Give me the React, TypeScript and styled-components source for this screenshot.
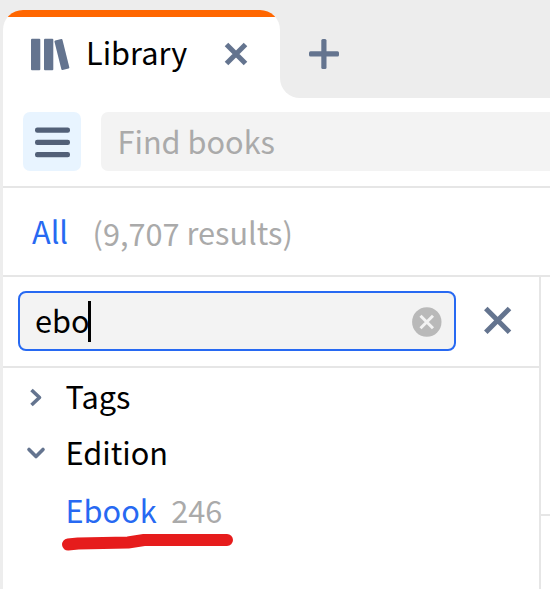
import React from "react";
import styled, { createGlobalStyle } from "styled-components";

const slate = "#64748f";
const blue = "#2769f2";
const line = "#e6e6e6";
const chrome = "#ededed";

const GlobalStyle = createGlobalStyle`
  * { box-sizing: border-box; }
  body {
    margin: 0;
    overflow: hidden;
    background: #fff;
    font-family: "Noto Sans CJK SC", "Noto Sans", sans-serif;
  }
`;

const Window = styled.div`
  display: flex;
  flex-direction: column;
  width: 550px;
  height: 589px;
  overflow: hidden;
  background: #fff;
  border-left: 3px solid ${chrome};
`;

const Icon = styled.svg`
  display: block;
  flex: none;
  overflow: visible;
`;

const Label = styled.span<{
  $size?: number;
  $color?: string;
  $drop?: number;
}>`
  display: inline-block;
  flex: none;
  white-space: pre;
  line-height: 40px;
  font-size: ${(p) => p.$size ?? 30.7}px;
  color: ${(p) => p.$color ?? "#000"};
  transform: translateY(${(p) => p.$drop ?? -1}px);
`;

const TabStrip = styled.header`
  display: flex;
  flex: none;
  height: 98px;
`;

const TabSlot = styled.div`
  width: 277px;
  padding-top: 10px;
  background: linear-gradient(${chrome} 50px, #fff 50px);
`;

const Tab = styled.div`
  display: flex;
  align-items: center;
  height: 88px;
  padding: 0 33px 0 28px;
  border-radius: 20px 20px 0 0;
  background: linear-gradient(#ff6600 7px, #fff 7px);
`;

const TabTitle = styled.div`
  display: flex;
  flex: 1;
  margin-left: 16px;
`;

const NewTab = styled.div`
  flex: 1;
  padding: 39px 0 0 29px;
  border-bottom-left-radius: 20px;
  background: ${chrome};
`;

const Toolbar = styled.div`
  display: flex;
  flex: none;
  height: 90px;
  padding: 14px 0 0 20px;
  gap: 20px;
  border-bottom: 2px solid ${line};
`;

const MenuButton = styled.div`
  display: flex;
  align-items: center;
  justify-content: center;
  width: 58px;
  height: 59px;
  padding-top: 1px;
  border-radius: 7px;
  background: #e8f4ff;
`;

const SearchField = styled.div`
  display: flex;
  flex: 1;
  align-items: center;
  height: 59px;
  padding-left: 16.5px;
  border-radius: 7px 0 0 7px;
  background: #f3f3f3;
`;

const Results = styled.div`
  display: flex;
  flex: none;
  align-items: center;
  height: 89px;
  padding-left: 29px;
  border-bottom: 2px solid ${line};
`;

const Count = styled.div`
  display: flex;
  margin-left: 24.5px;
`;

const Body = styled.div`
  display: flex;
  flex: 1;
`;

const Sidebar = styled.aside`
  width: 538px;
  border-right: 2px solid ${line};
`;

const Main = styled.main`
  flex: 1;
  height: 239px;
  border-bottom: 2px solid ${line};
`;

const FilterBar = styled.div`
  display: flex;
  align-items: center;
  height: 91px;
  padding: 0 0 2px 15px;
  gap: 28px;
  border-bottom: 2px solid ${line};
`;

const FilterInput = styled.div`
  display: flex;
  align-items: center;
  width: 438px;
  height: 60px;
  padding: 0 12px 0 15px;
  border: 2px solid ${blue};
  border-radius: 8px;
  background: #f3f3f3;
`;

const Caret = styled.div`
  width: 3px;
  height: 41px;
  margin: 1px auto 0 -2px;
  background: #000;
`;

const Tree = styled.div`
  padding-top: 2px;
`;

const TreeRow = styled.div<{ $height?: number }>`
  display: grid;
  grid-template-columns: 20px auto auto 1fr;
  align-items: center;
  height: ${(p) => p.$height ?? 56}px;
  padding-left: 23px;
`;

const TreeText = styled.div`
  display: flex;
  grid-column: 2;
  margin-left: 19.5px;
`;

const RowCount = styled.div`
  display: flex;
  margin-left: 14.5px;
`;

const Underline = styled.div`
  padding-left: 57px;
  margin-top: -8px;
`;

export default function App() {
  return (
    <Window>
      <GlobalStyle />
      <TabStrip>
        <TabSlot>
          <Tab>
            <Icon width="39" height="33" viewBox="0 0 39 33" fill={slate}>
              <rect x="0" y="0.8" width="9.3" height="31.5" rx="1" />
              <rect x="13" y="0.8" width="9.3" height="31.5" rx="1" />
              <rect x="26.8" y="1.3" width="8.2" height="30.4" rx="1" transform="rotate(-14 30.9 16.5)" />
            </Icon>
            <TabTitle>
              <Label $drop={-2}>Library</Label>
            </TabTitle>
            <Icon width="22" height="22" viewBox="0 0 22 22" stroke={slate} strokeWidth="5">
              <path d="M1.5 1.5 20.5 20.5M20.5 1.5 1.5 20.5" />
            </Icon>
          </Tab>
        </TabSlot>
        <NewTab>
          <Icon width="30" height="30" viewBox="0 0 30 30" fill={slate}>
            <rect x="0" y="12.3" width="30" height="5.2" rx="1.5" />
            <rect x="12.3" y="0" width="5.2" height="30" rx="1.5" />
          </Icon>
        </NewTab>
      </TabStrip>
      <Toolbar>
        <MenuButton>
          <Icon width="35" height="31" viewBox="0 0 35 31" fill="#526078">
            <rect x="0" y="0.5" width="35" height="5.3" rx="2.3" />
            <rect x="0" y="12.8" width="35" height="5.3" rx="2.3" />
            <rect x="0" y="25" width="35" height="5.3" rx="2.3" />
          </Icon>
        </MenuButton>
        <SearchField>
          <Label $color="#aaa">Find books</Label>
        </SearchField>
      </Toolbar>
      <Results>
        <Label $color={blue}>All</Label>
        <Count>
          <Label $color="#aaa" $drop={0}>(</Label>
          <Label $color="#aaa" $drop={1}>9,707</Label>
          <Label $color="#aaa" $drop={0}> results)</Label>
        </Count>
      </Results>
      <Body>
        <Sidebar>
          <FilterBar>
            <FilterInput>
              <Label>ebo</Label>
              <Caret />
              <Icon width="30" height="30" viewBox="0 0 30 30">
                <circle cx="14.8" cy="16" r="14.7" fill="#b9b9b9" />
                <path d="M8.5 9.8 21 22.3M21 9.8 8.5 22.3" stroke="#f3f3f3" strokeWidth="3" />
              </Icon>
            </FilterInput>
            <Icon width="28" height="28" viewBox="0 0 28 28" stroke={slate} strokeWidth="5">
              <path d="M1.8 1.5 25.5 25.2M25.5 1.5 1.8 25.2" />
            </Icon>
          </FilterBar>
          <Tree>
            <TreeRow>
              <Icon width="20" height="20" viewBox="0 0 20 20" fill="none" stroke={slate} strokeWidth="3.6" strokeLinecap="butt" strokeLinejoin="round">
                <path d="M5.5 2 13.5 9.5 5.5 17" />
              </Icon>
              <TreeText>
                <Label $drop={-2}>Tags</Label>
              </TreeText>
            </TreeRow>
            <TreeRow>
              <Icon width="20" height="20" viewBox="0 0 20 20" fill="none" stroke={slate} strokeWidth="3.6" strokeLinecap="round" strokeLinejoin="round">
                <path d="M3 5.5 10 12.5 17 5.5" />
              </Icon>
              <TreeText>
                <Label $drop={-2}>Edition</Label>
              </TreeText>
            </TreeRow>
            <TreeRow $height={59}>
              <TreeText>
                <Label $color={blue} $drop={-2}>Ebook</Label>
              </TreeText>
              <RowCount>
                <Label $color="#aaa" $drop={-2}>246</Label>
              </RowCount>
            </TreeRow>
            <Underline>
              <Icon width="175" height="20" viewBox="0 0 175 20" fill="none" stroke="#e61c1c" strokeWidth="12" strokeLinecap="round" strokeLinejoin="round">
                <path d="M8 11.5 18 10.5 68 9.5 84 7 167 7" />
              </Icon>
            </Underline>
          </Tree>
        </Sidebar>
        <Main />
      </Body>
    </Window>
  );
}
